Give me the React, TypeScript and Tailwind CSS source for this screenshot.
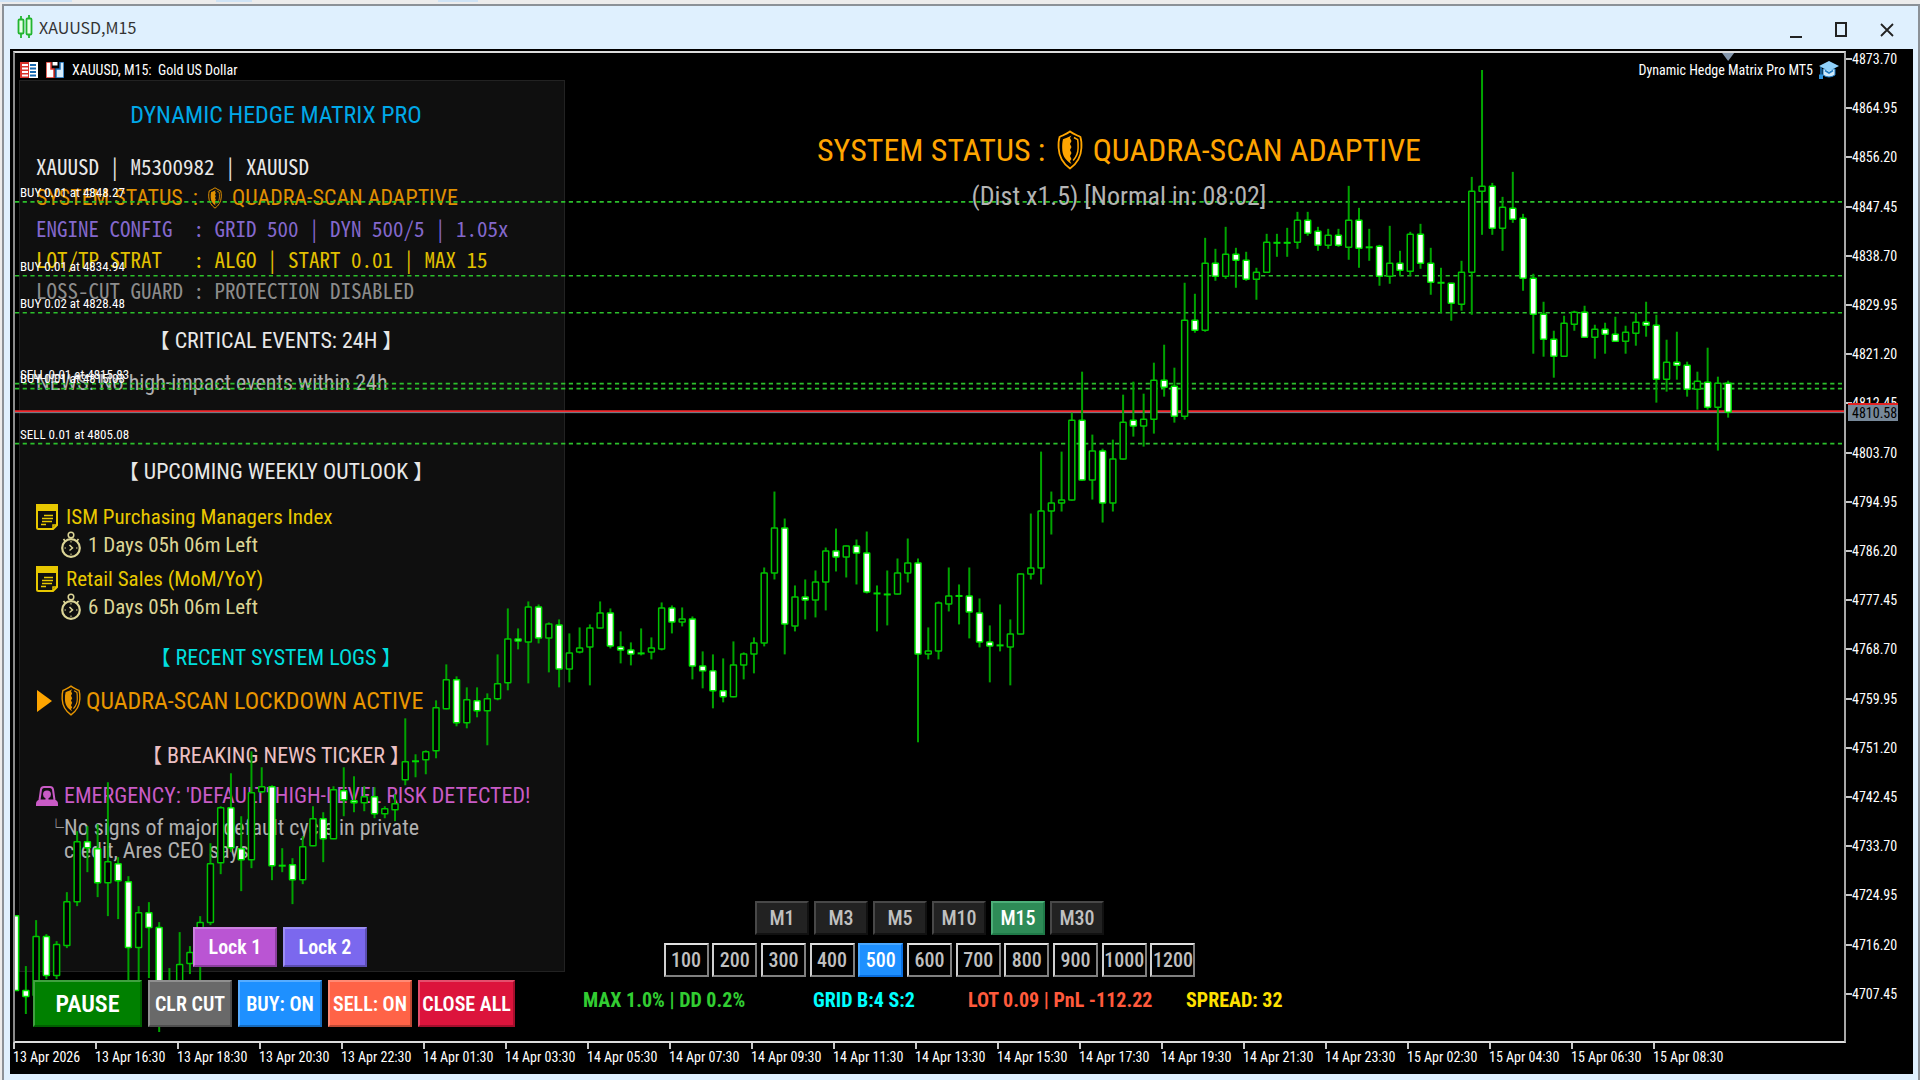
import { useState } from "react";
import clsx from "clsx";

type Kind = "up" | "down" | "doji";
// [high, bodyTop, bodyBottom, low, kind]
type Candle = [number, number, number, number, Kind];

const U = "up";
const D = "down";
const J = "doji";

const candles: Candle[] = [
  [916, 916, 992, 992, D], [967, 991, 998, 1015, D], [921, 937, 997, 997, U], [935, 937, 977, 980, D],
  [942, 945, 977, 980, U], [893, 902, 947, 949, U], [832, 842, 903, 907, U], [827, 842, 849, 873, D],
  [825, 849, 884, 898, D], [783, 862, 884, 917, U], [858, 864, 882, 920, D], [877, 882, 949, 985, D],
  [907, 913, 949, 985, U], [903, 913, 929, 979, D], [923, 928, 1010, 1033, D], [969, 985, 1000, 1005, U],
  [933, 965, 990, 990, U], [947, 953, 965, 975, U], [917, 923, 953, 985, U], [844, 864, 924, 926, U],
  [807, 808, 864, 875, U], [774, 808, 849, 853, D], [817, 849, 861, 892, D], [752, 793, 861, 869, U],
  [768, 787, 793, 794, U], [786, 787, 867, 881, D], [849, 866, 867, 873, J], [859, 865, 881, 905, D],
  [837, 847, 881, 885, U], [807, 819, 847, 847, U], [813, 819, 840, 863, D], [787, 790, 840, 840, U],
  [768, 791, 801, 817, D], [777, 801, 804, 813, D], [787, 797, 804, 812, U], [788, 797, 815, 819, D],
  [807, 809, 815, 819, U], [795, 804, 811, 822, U], [719, 762, 781, 786, U], [755, 761, 763, 778, J],
  [751, 752, 761, 775, U], [701, 708, 752, 759, U], [665, 680, 710, 710, U], [677, 680, 724, 727, D],
  [688, 700, 724, 729, U], [688, 701, 712, 718, D], [694, 699, 712, 746, U], [655, 684, 700, 701, U],
  [609, 639, 684, 691, U], [629, 639, 642, 650, D], [602, 607, 643, 684, U], [605, 607, 639, 644, D],
  [623, 624, 639, 673, U], [620, 625, 670, 688, D], [634, 653, 670, 683, U], [628, 648, 653, 654, U],
  [625, 628, 648, 686, U], [602, 613, 629, 629, U], [609, 613, 647, 649, D], [632, 647, 651, 664, D],
  [643, 650, 655, 666, D], [629, 653, 655, 656, J], [638, 648, 653, 660, U], [603, 608, 650, 651, U],
  [606, 608, 623, 634, D], [608, 619, 623, 627, U], [617, 619, 667, 680, D], [652, 666, 672, 689, D],
  [655, 671, 692, 709, D], [659, 691, 698, 703, D], [642, 665, 698, 698, U], [653, 654, 666, 680, U],
  [638, 643, 655, 674, U], [568, 573, 644, 647, U], [492, 528, 574, 580, U], [519, 528, 625, 655, D],
  [586, 597, 627, 632, U], [580, 597, 601, 620, D], [571, 582, 601, 618, U], [548, 551, 583, 611, U],
  [529, 551, 558, 572, D], [546, 546, 558, 578, U], [540, 546, 554, 585, D], [532, 553, 593, 594, D],
  [586, 593, 595, 632, J], [571, 594, 596, 626, J], [559, 573, 595, 595, U], [539, 563, 574, 583, U],
  [559, 563, 655, 743, D], [628, 651, 655, 660, U], [602, 603, 652, 660, U], [568, 596, 605, 612, U],
  [585, 596, 597, 625, J], [568, 596, 613, 639, D], [599, 613, 643, 648, D], [626, 642, 647, 683, D],
  [605, 645, 647, 652, J], [620, 634, 648, 686, U], [574, 574, 635, 635, U], [514, 568, 575, 580, U],
  [452, 511, 569, 585, U], [492, 503, 512, 535, U], [452, 500, 504, 512, U], [413, 420, 501, 501, U],
  [372, 420, 481, 481, D], [435, 451, 481, 500, U], [449, 451, 504, 523, D], [440, 459, 504, 512, U],
  [395, 422, 460, 460, U], [382, 420, 427, 437, D], [394, 419, 427, 447, U], [363, 380, 420, 434, U],
  [345, 380, 388, 397, D], [368, 386, 417, 423, D], [283, 320, 417, 420, U], [294, 320, 331, 333, D],
  [238, 263, 331, 332, U], [249, 263, 277, 281, D], [227, 254, 277, 279, U], [248, 254, 261, 288, D],
  [252, 260, 280, 281, D], [268, 272, 280, 300, U], [234, 242, 273, 273, U], [234, 242, 244, 257, J],
  [228, 242, 244, 257, J], [212, 220, 243, 249, U], [212, 220, 234, 236, D], [227, 231, 246, 251, D],
  [229, 235, 246, 249, U], [229, 235, 246, 247, D], [186, 220, 248, 260, U], [208, 220, 249, 268, D],
  [229, 247, 248, 261, J], [245, 246, 277, 286, D], [226, 263, 277, 284, U], [251, 263, 271, 276, D],
  [232, 234, 272, 276, U], [224, 234, 264, 269, D], [248, 263, 283, 295, D], [268, 282, 284, 313, J],
  [283, 283, 304, 321, D], [261, 272, 305, 311, U], [177, 191, 273, 315, U], [70, 186, 192, 235, U],
  [183, 186, 229, 235, D], [197, 207, 229, 251, U], [172, 208, 220, 223, D], [214, 218, 279, 291, D],
  [274, 278, 315, 354, D], [302, 314, 340, 357, D], [331, 339, 357, 378, D], [316, 323, 357, 357, U],
  [311, 312, 325, 331, U], [306, 312, 338, 338, D], [325, 329, 338, 359, U], [323, 329, 335, 354, D],
  [317, 334, 342, 342, D], [326, 332, 342, 354, U], [313, 322, 334, 346, U], [302, 322, 326, 337, D],
  [315, 325, 380, 403, D], [340, 362, 380, 392, U], [332, 362, 366, 380, D], [362, 365, 390, 397, D],
  [372, 381, 390, 410, U], [348, 382, 408, 410, D], [377, 383, 408, 451, U], [381, 383, 413, 418, D],
];

const CANDLE_START = 13.6;
const CANDLE_STEP = 10.266;

const orderLines = [202, 276, 313, 384, 389, 444];

const orderLabels = [
  { text: "BUY 0.01 at 4848.27", place: "top-[132px]" },
  { text: "BUY 0.01 at 4834.94", place: "top-[206px]" },
  { text: "BUY 0.02 at 4828.48", place: "top-[243px]" },
  { text: "SELL 0.01 at 4815.83", place: "top-[314px]" },
  { text: "BUY 0.01 at 4815.03", place: "top-[318px]" },
  { text: "SELL 0.01 at 4805.08", place: "top-[374px]" },
];

const prices = Array.from({ length: 20 }, (_, i) => (4873.7 - i * 8.75).toFixed(2));

const times = [
  "13 Apr 2026", "13 Apr 16:30", "13 Apr 18:30", "13 Apr 20:30", "13 Apr 22:30", "14 Apr 01:30",
  "14 Apr 03:30", "14 Apr 05:30", "14 Apr 07:30", "14 Apr 09:30", "14 Apr 11:30", "14 Apr 13:30",
  "14 Apr 15:30", "14 Apr 17:30", "14 Apr 19:30", "14 Apr 21:30", "14 Apr 23:30", "15 Apr 02:30",
  "15 Apr 04:30", "15 Apr 06:30", "15 Apr 08:30",
];

const timeframes = ["M1", "M3", "M5", "M10", "M15", "M30"];
const gridSteps = [100, 200, 300, 400, 500, 600, 700, 800, 900, 1000, 1200];

const events = [
  { name: "ISM Purchasing Managers Index", left: "1 Days 05h 06m Left" },
  { name: "Retail Sales (MoM/YoY)", left: "6 Days 05h 06m Left" },
];

const ShieldIcon = ({ className }: { className: string }) => (
  <svg viewBox="0 0 26 40" className={className} fill="none" stroke="currentColor" aria-hidden="true">
    <path d="M13 1.5C9.5 4.2 5.6 5.4 2.600 7C1.600 10 1.400 14 1.600 18c.4 9 4.400 15.500 11.400 20.500C20 33.500 24 27 24.400 18c.2-4 0-8-1-11C20.400 5.400 16.500 4.200 13 1.500Z" strokeWidth="1.800" />
    <path d="M14.500 5.500C11 7.300 8.500 8.300 6 9.300c-.8 3-.9 6-.8 9.200 0 6.500 2.800 11.500 9.300 15.500l-1.500-3 1.500-2-1.500-3 1.500-3-1.500-3 1.500-3-1.500-3 1.500-3-1.500-3Z" fill="currentColor" stroke="none" />
    <path d="M17 7.500c1.300.8 2.300 1.300 3.600 2 .6 2.800.6 5.500.5 8.500 0 5.200-1.900 9.200-5 12.500" strokeWidth="1.500" />
  </svg>
);

const NoteIcon = () => (
  <svg viewBox="0 0 22 26" className="h-[26px] w-[22px] shrink-0" aria-hidden="true">
    <path d="M1 1h20v20l-4 4H2.500Q1 25 1 23.500Z" fill="none" stroke="currentColor" strokeWidth="2" />
    <path d="M0 0h22v7H0Z" fill="currentColor" />
    <path d="M8 11.500h9M6 14.500h11M6 17.500h10M5 20.500h5" stroke="currentColor" strokeWidth="1.500" />
    <path d="M17 25v-4h4" fill="none" stroke="currentColor" strokeWidth="1.500" />
  </svg>
);

const StopwatchIcon = () => (
  <svg viewBox="0 0 22 28" className="h-7 w-[22px] shrink-0" fill="none" stroke="currentColor" aria-hidden="true">
    <circle cx="11" cy="17" r="8.800" strokeWidth="2.200" />
    <circle cx="11" cy="4" r="2.800" strokeWidth="1.500" />
    <path d="m3.500 8 2 2.500M18.500 8l-2 2.500" strokeWidth="1.800" />
    <path d="m9.500 14 3 3-3 2.500" strokeWidth="1.500" />
    <path d="M11 10v1.500M11 22.500V24M4.500 17H6M16 17h1.500" strokeWidth="1" />
  </svg>
);

const SirenIcon = () => (
  <svg viewBox="0 0 22 20" className="h-5 w-[22px] shrink-0" aria-hidden="true">
    <path d="M3.500 14 5 3.500Q5.500 1 8 1h6q2.500 0 3 2.500L18.500 14" fill="none" stroke="currentColor" strokeWidth="2" />
    <path d="M0 18q0-4 4-4.500h14q4 .5 4 4.500v2H0Z" fill="currentColor" />
    <path d="M11 4.500a4 4 0 0 1 4 4 4 4 0 0 1-2.500 3.700V15h-3v-2.800A4 4 0 0 1 7 8.500a4 4 0 0 1 4-4Z" fill="currentColor" />
  </svg>
);

const CandlesIcon = () => (
  <svg viewBox="0 0 16 24" className="h-6 w-4" fill="#e8ffe8" stroke="#22b52f" strokeWidth="1.800" aria-hidden="true">
    <path d="M4 1v22M12 0v23" />
    <rect x="1.500" y="4.500" width="5" height="14" rx="1" />
    <rect x="9.500" y="3.500" width="5" height="16" rx="1" />
  </svg>
);

const TableIcon = () => (
  <svg viewBox="0 0 18 16" className="h-4 w-[18px]" aria-hidden="true">
    <path d="M0 0h18v16H0Z" fill="#fff" />
    <path d="M0 0h9v16H0Z" fill="#d9342b" />
    <path d="M2 3h6M2 6.500h6M2 10h6M2 13.500h6" stroke="#fff" strokeWidth="1.800" />
    <path d="M10 3h6M10 6.500h6M10 10h6M10 13.500h6" stroke="#1768b0" strokeWidth="1.800" />
  </svg>
);

const DepthIcon = () => (
  <svg viewBox="0 0 18 16" className="h-4 w-[18px]" aria-hidden="true">
    <path d="M0 0h5v7h3v9H0Z" fill="#fff" stroke="#d9342b" strokeWidth="1.500" />
    <path d="M18 0h-4v7h-4v9h8Z" fill="#d6ecfb" stroke="#1768b0" strokeWidth="1.500" />
    <path d="M6.500 0h5v3.500h-5Z" fill="#fff" />
  </svg>
);

const CapIcon = () => (
  <svg viewBox="0 0 20 18" className="h-[18px] w-5" aria-hidden="true">
    <path d="M4 8v6q6 4 12 0V8Z" fill="#cfe9fb" stroke="#1f7cc4" strokeWidth="1" />
    <path d="M10 0 20 5 10 10 0 5Z" fill="#8fd0fa" />
    <path d="M6 9.500 10 12l4-2.500" fill="none" stroke="#1f7cc4" strokeWidth="1.500" />
    <path d="M2 6v8" stroke="#1f7cc4" strokeWidth="1.500" />
    <path d="M0 13.500h4V18H0Z" fill="#2f95e0" />
  </svg>
);

const Chart = () => (
  <svg
    viewBox="13 53 1831 989"
    preserveAspectRatio="none"
    className="pointer-events-none absolute inset-0 z-10 h-full w-full"
    aria-label="XAUUSD M15 candles"
  >
    {orderLines.map((y) => (
      <path key={y} d={`M13 ${y}H1842`} stroke="#2cc02c" strokeWidth="1.600" strokeDasharray="4.200 3.500" />
    ))}
    <path d="M13 411.500H1844" stroke="#f02a2e" strokeWidth="2" />
    <path d="M13 413H1844" stroke="#7b8a96" strokeWidth="1" />
    {candles.map(([high, top, bottom, low, kind], i) => {
      const x = CANDLE_START + i * CANDLE_STEP;
      return (
        <g key={i}>
          <path d={`M${x} ${high}V${low}`} stroke="#00a400" strokeWidth="2" />
          {kind === "doji" ? (
            <path d={`M${x - 3.5} ${(top + bottom) / 2}h7`} stroke="#00dc00" strokeWidth="2" />
          ) : (
            <rect
              x={x - 3}
              y={top + 0.5}
              width="6"
              height={Math.max(bottom - top - 1, 2)}
              fill={kind === "up" ? "#000" : "#fff"}
              stroke={kind === "up" ? "#00c400" : "#00e800"}
              strokeWidth="1.500"
              rx="0.500"
            />
          )}
        </g>
      );
    })}
    <path d="M1722 53h12l-6 8Z" fill="#8496ab" />
  </svg>
);

const SectionTitle = ({ text, className }: { text: string; className: string }) => (
  <h2 className={clsx("pr-8 text-center text-[22px] leading-8", className)}>
    <span className="text-xl">【</span> {text} <span className="text-xl">】</span>
  </h2>
);

const BevelButton = ({ className, children }: { className: string; children: React.ReactNode }) => (
  <button
    type="button"
    className={clsx(
      "relative cursor-pointer border-2 border-t-white/25 border-r-black/25 border-b-black/25 border-l-white/25 font-semibold whitespace-nowrap text-white",
      className
    )}
  >
    {children}
  </button>
);

const InfoPanel = () => (
  <section className="mb-2 flex w-[546px] shrink-0 flex-col border border-[#222] bg-[#0f0f0f] px-4 pt-[18px] pb-1">
    <h1 className="pr-8 text-center text-2xl leading-8 text-[#00a8e8]">DYNAMIC HEDGE MATRIX PRO</h1>
    <div className="mt-5 font-['Noto_Sans_Mono_CJK_JP','DejaVu_Sans_Mono',monospace] text-[21px] leading-[31px] whitespace-pre">
      <p className="text-[#e8e8e8]">XAUUSD | M5300982 | XAUUSD</p>
      <p className="flex items-center font-['Roboto_Condensed',Roboto,sans-serif] text-[22px] leading-[31px] text-[#e09000]">
        SYSTEM STATUS  : <ShieldIcon className="mx-1 h-[22px] w-4" /> QUADRA-SCAN ADAPTIVE
      </p>
      <p className="text-[#8468cc]">{"ENGINE CONFIG  : GRID 500 | DYN 500/5 | 1.05x"}</p>
      <p className="text-[#e2c000]">{"LOT/TP STRAT   : ALGO | START 0.01 | MAX 15"}</p>
      <p className="text-[#8c8c8c]">LOSS-CUT GUARD : PROTECTION DISABLED</p>
    </div>

    <SectionTitle text="CRITICAL EVENTS: 24H" className="mt-[19px] text-[#e8e8e8]" />
    <p className="mt-[14px] text-[22px] leading-6 text-[#b0b0b0]">NEWS: No high-impact events within 24h</p>

    <SectionTitle text="UPCOMING WEEKLY OUTLOOK" className="mt-[61px] text-[#e8e8e8]" />
    <ul className="mt-[15px] flex flex-col gap-[6px] text-[21px] leading-7">
      {events.map((event) => (
        <li key={event.name}>
          <p className="flex items-center gap-2 text-[#e8c800]">
            <NoteIcon />
            {event.name}
          </p>
          <p className="flex items-center gap-[6px] pl-6 text-[#dcd596]">
            <StopwatchIcon />
            {event.left}
          </p>
        </li>
      ))}
    </ul>

    <SectionTitle text="RECENT SYSTEM LOGS" className="mt-[21px] text-[#00dede]" />
    <p className="mt-[11px] flex items-center text-2xl leading-7 text-[#e89600]">
      <svg viewBox="0 0 16 22" className="mr-2 h-[22px] w-4" fill="#ffa500" aria-hidden="true">
        <path d="M1 0 16 11 1 22Z" />
      </svg>
      <ShieldIcon className="mr-1 h-[31px] w-[22px]" />
      QUADRA-SCAN LOCKDOWN ACTIVE
    </p>

    <SectionTitle text="BREAKING NEWS TICKER" className="mt-6 text-[#ecc0c4]" />
    <p className="mt-[10px] flex items-center gap-[6px] text-[22px] leading-7 text-[#c95bc6]">
      <SirenIcon />
      EMERGENCY: 'DEFAULT' HIGH-LEVEL RISK DETECTED!
    </p>
    <div className="mt-[6px] flex pl-3 text-[22px] leading-[23px] text-[#b0b0b0]">
      <span className="w-4 text-base leading-[23px]">└</span>
      <p className="w-[370px]">No signs of major default cycle in private credit, Ares CEO says</p>
    </div>

    <div className="mt-auto flex justify-center gap-[6px] pr-6">
      <BevelButton className="z-20 h-10 w-[84px] bg-[#ba55d3] text-xl">Lock 1</BevelButton>
      <BevelButton className="z-20 h-10 w-[84px] bg-[#7b68ee] text-xl">Lock 2</BevelButton>
    </div>
  </section>
);

export default function App() {
  const [timeframe, setTimeframe] = useState("M15");
  const [step, setStep] = useState(500);

  return (
    <div className="flex h-screen min-h-[1000px] flex-col overflow-hidden bg-[#ececec] font-['Roboto_Condensed',Roboto,'Noto_Sans_CJK_JP',sans-serif]">
      <div className="flex h-1 shrink-0 gap-24">
        <span className="h-[2px] w-[72px] bg-[#cfe3f5]" />
        <span className="ml-12 h-[2px] w-9 bg-[#cfe3f5]" />
        <span className="ml-[90px] h-[2px] w-10 bg-[#cfe3f5]" />
      </div>
      <main className="ml-[2px] flex flex-1 flex-col border-t-2 border-r-2 border-l-2 border-[#8b9197] bg-[#dff0fe] pr-[5px] pb-[6px] pl-[6px]">
        <header className="flex h-[43px] shrink-0 items-center justify-between pr-[19px] pl-[7px]">
          <div className="flex items-center gap-[6px] pb-[2px] font-['Noto_Sans_CJK_JP','Open_Sans',sans-serif] text-base text-[#333]">
            <CandlesIcon />
            XAUUSD,M15
          </div>
          <div className="flex items-center gap-[33px] pt-1 text-[#222]">
            <button type="button" aria-label="Minimize" className="flex h-5 w-3 items-end pb-[2px]">
              <span className="h-[2px] w-3 bg-current" />
            </button>
            <button type="button" aria-label="Maximize" className="h-[15px] w-3 border-2 border-current" />
            <button type="button" aria-label="Close">
              <svg viewBox="0 0 14 14" className="h-[14px] w-[14px]" stroke="currentColor" strokeWidth="1.800">
                <path d="m1 1 12 12M13 1 1 13" />
              </svg>
            </button>
          </div>
        </header>

        <div className="grid flex-1 grid-cols-[1fr_67px] grid-rows-[1fr_31px] bg-black pt-[2px] pl-[3px] text-white">
          <div className="relative flex flex-col border-2 border-t-[#dcdcdc] border-r-[#a8a8a8] border-b-[#dcdcdc] border-l-[#8a8a8a]">
            <div className="flex h-[27px] shrink-0 items-center justify-between px-[5px] pt-[7px] text-sm leading-4">
              <div className="flex items-center gap-2">
                <TableIcon />
                <DepthIcon />
                <span className="whitespace-pre">{"XAUUSD, M15:  Gold US Dollar"}</span>
              </div>
              <div className="flex items-center gap-[6px]">
                Dynamic Hedge Matrix Pro MT5
                <CapIcon />
              </div>
            </div>

            <div className="flex flex-1 pl-[4px]">
              <InfoPanel />
              <div className="z-20 flex flex-1 flex-col pb-[3px]">
                <div className="flex w-[1108px] flex-col items-center pt-10">
                  <p className="flex items-center text-[32px] leading-[60px] whitespace-pre text-[#ffa500]">
                    SYSTEM STATUS : <ShieldIcon className="mr-[10px] ml-1 h-10 w-[26px]" />
                    QUADRA-SCAN ADAPTIVE
                  </p>
                  <p className="text-[26px] leading-8 text-[#b4b4b4]">(Dist x1.5) [Normal in: 08:02]</p>
                </div>

                <div className="mt-auto flex w-[729px] flex-col items-center gap-2">
                  <div className="flex gap-[5px]">
                    {timeframes.map((tf) => (
                      <button
                        key={tf}
                        type="button"
                        onClick={() => setTimeframe(tf)}
                        className={clsx(
                          "h-[34px] w-[54px] cursor-pointer border-2 text-xl font-medium",
                          tf === timeframe
                            ? "border-t-[#4cae78] border-r-[#1f7a48] border-b-[#1f7a48] border-l-[#4cae78] bg-[#2e8b57] text-white"
                            : "border-t-[#484848] border-r-[#111] border-b-[#111] border-l-[#484848] bg-[#222] text-[#c0c0c0]"
                        )}
                      >
                        {tf}
                      </button>
                    ))}
                  </div>
                  <div className="flex w-[532px] justify-between">
                    {gridSteps.map((value) => (
                      <button
                        key={value}
                        type="button"
                        onClick={() => setStep(value)}
                        className={clsx(
                          "flex h-[34px] w-[45px] cursor-pointer items-center justify-center border-2 text-xl font-medium",
                          value === step
                            ? "border-t-[#4aa8ff] border-r-[#0a6fe0] border-b-[#0a6fe0] border-l-[#4aa8ff] bg-[#1e90ff] text-white"
                            : "border-t-[#e0e0e0] border-r-[#808080] border-b-[#808080] border-l-[#d0d0d0] bg-black text-[#c0c0c0]"
                        )}
                      >
                        {value}
                      </button>
                    ))}
                  </div>
                </div>
              </div>
            </div>

            <footer className="relative z-20 mb-[14px] flex h-[47px] shrink-0 items-stretch gap-[6px] pl-[18px]">
              <BevelButton className="w-[109px] bg-[#008000] text-2xl font-bold">PAUSE</BevelButton>
              <BevelButton className="w-[84px] bg-[#696969] text-xl">CLR CUT</BevelButton>
              <BevelButton className="w-[84px] bg-[#1e90ff] text-xl">BUY: ON</BevelButton>
              <BevelButton className="w-[84px] bg-[#ff6347] text-xl">SELL: ON</BevelButton>
              <BevelButton className="w-[97px] bg-[#dc143c] text-xl">CLOSE ALL</BevelButton>
              <div className="ml-[62px] grid grid-cols-[230px_155px_218px_auto] pt-[7px] text-xl leading-[26px] font-bold whitespace-nowrap">
                <span className="text-[#32cd32]">MAX 1.0% | DD 0.2%</span>
                <span className="text-[#00ffff]">GRID B:4 S:2</span>
                <span className="text-[#ff5a3c]">LOT 0.09 | PnL -112.22</span>
                <span className="text-[#ffe000]">SPREAD: 32</span>
              </div>
            </footer>

            <Chart />
            {orderLabels.map((label) => (
              <span key={label.text} className={clsx("absolute left-[5px] z-20 text-[13px] leading-4", label.place)}>
                {label.text}
              </span>
            ))}
          </div>

          <div className="relative flex flex-col justify-between pb-[41px] text-sm leading-4">
            {prices.map((price) => (
              <div key={price} className="flex items-center">
                <span className="h-[2px] w-[6px] bg-[#c8c8c8]" />
                {price}
              </div>
            ))}
            <div className="absolute top-[352px] left-[2px] h-[18px] w-[50px] border-t-2 border-[#e32222] bg-[#778899] pl-1 text-black">
              4810.58
            </div>
          </div>

          <div className="col-span-2 flex text-sm leading-4 whitespace-nowrap">
            {times.map((time) => (
              <div key={time} className="w-[82px] shrink-0">
                <div className="h-[6px] w-[2px] bg-[#c8c8c8]" />
                {time}
              </div>
            ))}
          </div>
        </div>
      </main>
    </div>
  );
}
